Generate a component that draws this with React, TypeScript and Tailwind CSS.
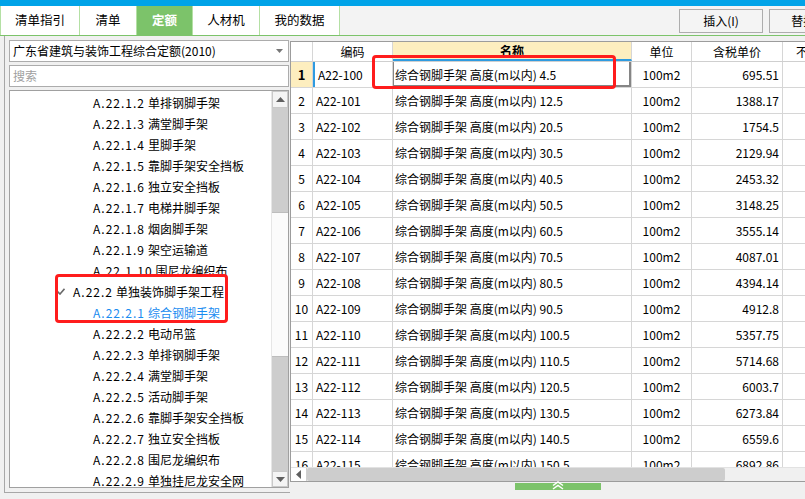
const tree: { code: string; name: string; level: number; active?: boolean }[] = [
  { code: "A.22.1.2", name: "单排钢脚手架", level: 3 },
  { code: "A.22.1.3", name: "满堂脚手架", level: 3 },
  { code: "A.22.1.4", name: "里脚手架", level: 3 },
  { code: "A.22.1.5", name: "靠脚手架安全挡板", level: 3 },
  { code: "A.22.1.6", name: "独立安全挡板", level: 3 },
  { code: "A.22.1.7", name: "电梯井脚手架", level: 3 },
  { code: "A.22.1.8", name: "烟囱脚手架", level: 3 },
  { code: "A.22.1.9", name: "架空运输道", level: 3 },
  { code: "A.22.1.10", name: "围尼龙编织布", level: 3 },
  { code: "A.22.2", name: "单独装饰脚手架工程", level: 2 },
  { code: "A.22.2.1", name: "综合钢脚手架", level: 3, active: true },
  { code: "A.22.2.2", name: "电动吊篮", level: 3 },
  { code: "A.22.2.3", name: "单排钢脚手架", level: 3 },
  { code: "A.22.2.4", name: "满堂脚手架", level: 3 },
  { code: "A.22.2.5", name: "活动脚手架", level: 3 },
  { code: "A.22.2.6", name: "靠脚手架安全挡板", level: 3 },
  { code: "A.22.2.7", name: "独立安全挡板", level: 3 },
  { code: "A.22.2.8", name: "围尼龙编织布", level: 3 },
  { code: "A.22.2.9", name: "单独挂尼龙安全网", level: 3 },
];

const rows: [string, string, string][] = [
  ["A22-100", "4.5", "695.51"],
  ["A22-101", "12.5", "1388.17"],
  ["A22-102", "20.5", "1754.5"],
  ["A22-103", "30.5", "2129.94"],
  ["A22-104", "40.5", "2453.32"],
  ["A22-105", "50.5", "3148.25"],
  ["A22-106", "60.5", "3555.14"],
  ["A22-107", "70.5", "4087.01"],
  ["A22-108", "80.5", "4394.14"],
  ["A22-109", "90.5", "4912.8"],
  ["A22-110", "100.5", "5357.75"],
  ["A22-111", "110.5", "5714.68"],
  ["A22-112", "120.5", "6003.7"],
  ["A22-113", "130.5", "6273.84"],
  ["A22-114", "140.5", "6559.6"],
  ["A22-115", "150.5", "6892.86"],
];

const tabs = [
  { label: "清单指引", w: "w-[80px] border-l" },
  { label: "清单", w: "w-[57px]" },
  { label: "定额", w: "w-[56px]", active: true },
  { label: "人材机", w: "w-[67px]" },
  { label: "我的数据", w: "w-[80px]" },
];

const cols = "grid grid-cols-[22px_80px_239px_60px_91px_60px]";

function Tri({ up = true }: { up?: boolean }) {
  return (
    <svg width="9" height="5" viewBox="0 0 9 5">
      <path d={up ? "M0 5 L4.5 0 L9 5 Z" : "M0 0 L4.5 5 L9 0 Z"} fill="#606060" />
    </svg>
  );
}

function LeftPanel() {
  return (
    <div className="w-[290px] pl-[4px] shrink-0">
      <div className="h-[457px] border-l border-b border-[#a7a7a7] pt-[4px] pl-[4px] pr-[1px] flex flex-col gap-[3px]">
        <div className="h-[22px] bg-white border border-[#acacac] flex items-center pl-[3px] pr-[5px]">
          <span className="flex-1">广东省建筑与装饰工程综合定额(2010)</span>
          <svg width="7" height="4" viewBox="0 0 7 4">
            <path d="M0 0 L3.5 4 L7 0 Z" fill="#777" />
          </svg>
        </div>
        <div className="h-[22px] bg-white border border-[#acacac] flex items-center pl-[3px] text-[#a0a0a0]">
          搜索
        </div>
        <div className="h-[398px] bg-white border border-[#a0a0a0] flex overflow-hidden">
          <div className="flex-1 pt-[1px] overflow-hidden">
            {tree.map((t) => (
              <div
                key={t.code}
                className={`h-[21px] flex items-center whitespace-nowrap ${t.level === 2 ? "pl-[47px]" : "pl-[83px]"} ${t.active ? "text-[#1a8cf0]" : "text-black"}`}
              >
                {t.level === 2 && (
                  <svg width="8" height="7" viewBox="0 0 8 7" className="mr-[8px]">
                    <path d="M0.5 3.5 L3 6 L7.5 0.8" stroke="#6a6a6a" strokeWidth="1.6" fill="none" />
                  </svg>
                )}
                <span className="tracking-[1px] mr-[3px]">{t.code}</span>
                <span>{t.name}</span>
              </div>
            ))}
          </div>
          <div className="w-[17px] flex flex-col bg-[#cdcdcd] border-l border-[#e6e6e6]">
            <div className="h-[17px] bg-[#f4f4f4] border border-[#c9c9c9] flex items-center justify-center">
              <Tri />
            </div>
            <div className="h-[104px]" />
            <div className="h-[145px] bg-[#fbfbfb] border-y border-[#bdbdbd]" />
            <div className="flex-1" />
            <div className="h-[16px] bg-[#f4f4f4] border border-[#c9c9c9] flex items-center justify-center">
              <Tri up={false} />
            </div>
          </div>
        </div>
      </div>
    </div>
  );
}

function Table() {
  return (
    <div className="flex-1 pt-[5px] min-w-0">
      <div className="border-t border-l border-b border-[#9c9c9c] bg-white overflow-hidden">
        <div className={`${cols} h-[20px] border-b border-[#cfcfcf]`}>
          <div className="border-r border-[#d6d6d6]" />
          <div className="border-r border-[#d6d6d6] flex items-center justify-center">编码</div>
          <div className="border-r border-[#d6d6d6] bg-[#fdeebf] border-b-2 border-b-[#2e9be0] flex items-center justify-center font-bold">
            名称
          </div>
          <div className="border-r border-[#d6d6d6] flex items-center justify-center">单位</div>
          <div className="border-r border-[#d6d6d6] flex items-center justify-center">含税单价</div>
          <div className="flex items-center pl-[13px]">不</div>
        </div>
        <div className="h-[405px] overflow-hidden">
          {rows.map((r, i) => (
            <div key={r[0]} className={`${cols} h-[26px] border-b border-[#d6d6d6]`}>
              <div
                className={`border-r border-[#d6d6d6] flex items-center justify-center ${i === 0 ? "bg-[#fdeebf] font-bold text-[13px]" : ""}`}
              >
                {i + 1}
              </div>
              <div
                className={`border-r border-[#d6d6d6] flex items-center pl-[3px] ${i === 0 ? "border-l-2 border-l-[#2e9be0] pl-[1px]" : ""}`}
              >
                {r[0]}
              </div>
              <div className="relative border-r border-[#d6d6d6] flex items-center pl-[2px] whitespace-nowrap">
                综合钢脚手架 高度(m以内) {r[1]}
                {i === 0 && (
                  <div className="absolute inset-0 -top-px border-l border-r-2 border-b-2 border-[#858585]" />
                )}
              </div>
              <div className="border-r border-[#d6d6d6] flex items-center justify-center">100m2</div>
              <div className="border-r border-[#d6d6d6] flex items-center justify-end pr-[3px]">{r[2]}</div>
              <div />
            </div>
          ))}
        </div>
        <div className="h-[14px] flex bg-[#f0f0f0] border-t border-[#e2e2e2]">
          <div className="w-[16px] bg-white border-r border-[#d0d0d0] flex items-center justify-center">
            <svg width="5" height="9" viewBox="0 0 5 9">
              <path d="M5 0 L0 4.5 L5 9 Z" fill="#606060" />
            </svg>
          </div>
          <div className="w-[418px] bg-[#cdcdcd] rounded-[2px]" />
          <div className="flex-1" />
        </div>
      </div>
      <div className="h-[7px] w-[86px] ml-[225px] mt-px bg-[#7cc36a] relative">
        <svg width="12" height="9" viewBox="0 0 12 9" className="absolute left-[37px] -top-[2px]">
          <path d="M1 4.5 L6 1 L11 4.5 M1 8 L6 4.5 L11 8" stroke="white" strokeWidth="1.5" fill="none" />
        </svg>
      </div>
    </div>
  );
}

export default function App() {
  return (
    <div className="relative w-[805px] h-[499px] overflow-hidden bg-[#f0f0f0] text-[12px] leading-none text-black font-['Noto_Sans_CJK_SC',sans-serif]">
      <div className="h-[6px] bg-[#00a3e8]" />
      <div className="h-[30px] flex items-start bg-[#f3f3f3] border-b border-[#7cc36a]">
        <div className="w-[4px] h-full bg-[#d3dbe4]" />
        {tabs.map((t) => (
          <div
            key={t.label}
            className={`${t.w} h-[29px] shrink-0 border-r border-[#b4e0a4] flex items-center justify-center text-[12.5px] ${t.active ? "bg-[#7cc36a] text-white font-bold" : "bg-white"}`}
          >
            {t.label}
          </div>
        ))}
        <div className="ml-[339px] mt-[3px] w-[84px] h-[24px] shrink-0 border border-[#adadad] bg-[#f4f4f4] flex items-center justify-center">
          插入(I)
        </div>
        <div className="ml-[6px] mt-[3px] w-[84px] h-[24px] shrink-0 border border-[#adadad] bg-[#f4f4f4] flex items-center justify-center">
          替换(R)
        </div>
      </div>
      <div className="flex h-[463px]">
        <LeftPanel />
        <Table />
      </div>

      <div className="absolute left-[55px] top-[274px] w-[173px] h-[49px] border-[3px] border-[#ff1c1c] rounded-[4px]" />
      <div className="absolute left-[372px] top-[55px] w-[244px] h-[34px] border-[3px] border-[#ff1c1c] rounded-[4px]" />
    </div>
  );
}
